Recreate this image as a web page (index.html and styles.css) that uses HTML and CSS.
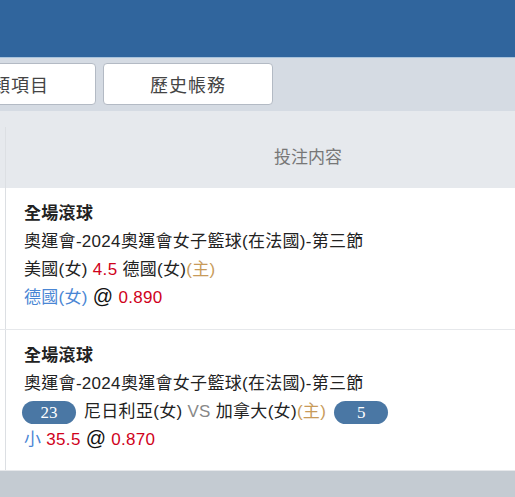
FILE: index.html
```html
<!DOCTYPE html>
<html lang="zh-Hant">

<head>
  <meta charset="UTF-8">
  <meta name="viewport" content="width=device-width, initial-scale=1.0">
  <title>投注記錄</title>
  <link rel="stylesheet" href="styles.css">
</head>

<body>
  <div class="topbar"></div>
  <div class="tabs">
    <button class="tab">分類項目</button>
    <button class="tab">歷史帳務</button>
  </div>
  <div class="table">
    <div class="table-head">投注内容</div>
    <div class="bet-row">
      <div class="bet-type">全場滾球</div>
      <div>奧運會-2024奧運會女子籃球(在法國)-第三節</div>
      <div>美國(女) <span class="red">4.5</span> 德國(女)<span class="home">(主)</span></div>
      <div><span class="blue">德國(女)</span> <span class="at">@</span> <span class="red">0.890</span></div>
    </div>
    <div class="bet-row">
      <div class="bet-type">全場滾球</div>
      <div>奧運會-2024奧運會女子籃球(在法國)-第三節</div>
      <div class="teams">
        <span class="score">23</span>
        <span>尼日利亞(女) <span class="vs">VS</span> 加拿大(女)<span class="home">(主)</span></span>
        <span class="score">5</span>
      </div>
      <div><span class="blue">小</span> <span class="red">35.5</span> <span class="at">@</span> <span class="red">0.870</span></div>
    </div>
  </div>
  <div class="footer"></div>
</body>

</html>
```

FILE: styles.css
```css
body {
  margin: 0;
  height: 497px;
  overflow: hidden;
  display: flex;
  flex-direction: column;
  font-family: "Liberation Sans", "Noto Sans CJK TC", sans-serif;
  background-color: #c4cbd2;
}

.topbar {
  height: 57px;
  background-color: #30659d;
  border-bottom: 1px solid #a9c3dc;
  flex-shrink: 0;
}

.tabs {
  display: flex;
  gap: 7px;
  padding: 5px 0 6px;
  margin-left: -74px;
  background-color: #d5dbe3;
  flex-shrink: 0;
}

.tab {
  width: 170px;
  height: 42px;
  border: 1px solid #b3bac4;
  border-radius: 4px;
  background-color: #fff;
  color: #444;
  font-family: inherit;
  font-size: 18px;
  letter-spacing: 1px;
  flex-shrink: 0;
}

.table {
  width: 611px;
  flex-shrink: 0;
}

/* the column line sits 5px in from the page edge */
.table-head {
  height: 77px;
  display: flex;
  align-items: center;
  justify-content: center;
  padding: 12px 0 0 5px;
  box-sizing: border-box;
  background: linear-gradient(#dcdfe3, #dcdfe3) 5px 16px / 1px 100% no-repeat, #e6e9ed;
  color: #777;
  font-size: 17px;
}

.bet-row {
  padding: 12px 0 17px 24px;
  background: linear-gradient(#dcdfe3, #dcdfe3) 5px 0 / 1px 100% no-repeat, #fff;
  border-bottom: 1px solid #e6e8eb;
  font-size: 17px;
  letter-spacing: 0.3px;
  line-height: 28px;
  color: #222;
}

.bet-row > div {
  height: 28px;
}

.bet-row + .bet-row {
  padding-bottom: 16px;
}

.bet-type {
  font-weight: bold;
}

.red {
  color: #d0021b;
}

.blue {
  color: #4a86d4;
}

.home {
  color: #c89b5a;
}

.vs {
  color: #888;
}

.at {
  font-size: 20px;
  line-height: 1;
  color: #111;
}

.teams {
  display: flex;
  align-items: center;
  gap: 8px;
  margin-left: -2px;
}

.score {
  display: inline-block;
  width: 54px;
  height: 23px;
  line-height: 23px;
  border-radius: 12px;
  background-color: #4a77a4;
  color: #fff;
  text-align: center;
  font-family: "Liberation Serif", serif;
  font-size: 17px;
  letter-spacing: 0;
}

.footer {
  flex: 1;
  background-color: #c4cbd2;
}
```
